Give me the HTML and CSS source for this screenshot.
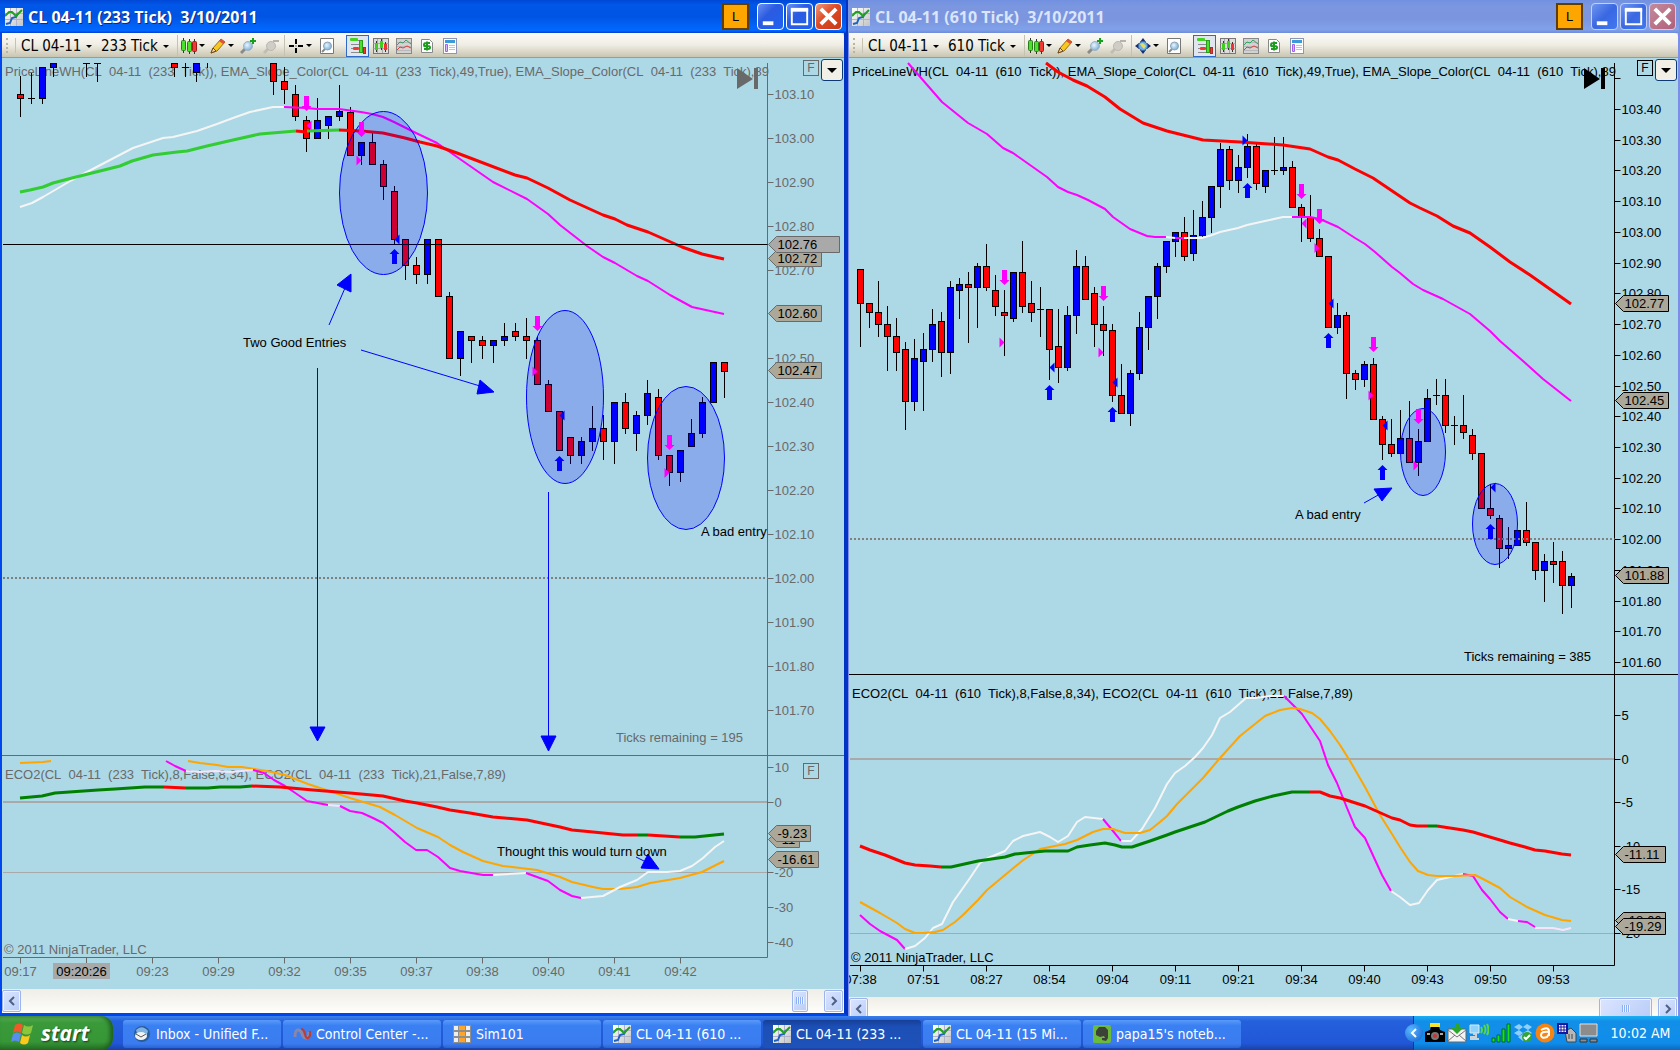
FILE: index.html
```
<!DOCTYPE html>
<html lang="en">

<head>
    <meta charset="UTF-8">
    <meta name="viewport" content="width=device-width, initial-scale=1.0">
    <title>CL 04-11 Charts</title>
    <link rel="stylesheet" href="styles.css">
</head>

<body>
    <!-- Shared icons -->
    <svg class="defs" width="0" height="0" aria-hidden="true">
        <linearGradient id="gloss" x1="0" y1="0" x2="1" y2="1">
            <stop offset="0" stop-color="#fff" />
            <stop offset="1" stop-color="#c4c4c4" />
        </linearGradient>
        <radialGradient id="lensFill" cx=".4" cy=".4" r=".7">
            <stop offset="0" stop-color="#e8f6ff" />
            <stop offset="1" stop-color="#6fa6cf" />
        </radialGradient>
        <symbol id="i-chart" viewBox="0 0 18 18">
            <rect width="18" height="18" fill="url(#gloss)" />
            <path d="M0 5.500h18M0 11.500h18M5.500 0v18M11.500 0v18" stroke="#b3b3c8" />
            <path d="M1 16l4-1 2-5 4-1 2-4" fill="none" stroke="#1c62c4" stroke-width="2" />
            <path d="M0 8l4-4 3 0 4 4 6-6" fill="none" stroke="#22a022" stroke-width="2" />
        </symbol>
        <symbol id="i-candles" viewBox="0 0 16 16">
            <path d="M2.500 0v15M8.500 1v15M13.500 1v15" stroke="#333" />
            <rect x=".5" y="2.500" width="4" height="10" rx="1" fill="#4be12b" stroke="#2a7d1b" />
            <rect x="6.500" y="3.500" width="4" height="10" rx="1" fill="#4be12b" stroke="#2a7d1b" />
            <rect x="11.500" y="3.500" width="4" height="10" rx="1" fill="#ef3a33" stroke="#a01a16" />
        </symbol>
        <symbol id="i-pencil" viewBox="0 0 16 16">
            <path d="M1 15l2-5 8-9 4 3-8 9z" fill="#f8c822" stroke="#9a6b12" />
            <path d="M11 1l4 3-2 2-4-3z" fill="#e0503c" />
            <path d="M1 15l2-5 3 3z" fill="#f1d9a8" stroke="#6a4a1a" />
        </symbol>
        <symbol id="i-zoomin" viewBox="0 0 16 16">
            <path d="M1 15l4-4" stroke="#8a8a8a" stroke-width="3" />
            <circle cx="8" cy="8" r="4.500" fill="url(#lensFill)" stroke="#9db4c6" />
            <path d="M13 0v6M10 3h6" stroke="#14a01a" stroke-width="2" />
        </symbol>
        <symbol id="i-zoomout" viewBox="0 0 16 16">
            <path d="M1 15l4-4" stroke="#c0bdb4" stroke-width="3" />
            <circle cx="8" cy="8" r="4.500" fill="#cfcdc6" stroke="#bab8b0" />
            <path d="M10 3h6" stroke="#b5b3ab" stroke-width="2" />
        </symbol>
        <symbol id="i-cross" viewBox="0 0 16 16">
            <path d="M8 1v5M8 10v5M1 8h5M10 8h5" stroke="#000" stroke-width="2" />
            <path d="M7.500 7.500h1v1h-1z" />
        </symbol>
        <symbol id="i-globe" viewBox="0 0 16 16">
            <path d="M8 0l3 4H5zM8 16l3-4H5zM0 8l4-3v6zM16 8l-4-3v6z" fill="#1a2c6c" />
            <circle cx="8" cy="8" r="4.500" fill="#6cb2ea" stroke="#3a6ca8" />
            <path d="M5 6l3-1 3 3-2 3-2-2z" fill="#e5dc63" />
        </symbol>
        <symbol id="i-page" viewBox="0 0 16 16">
            <path d="M1.500.5h13v15h-13z" fill="#fff" stroke="#777" />
            <path d="M3 14l3-3" stroke="#888" stroke-width="2" />
            <circle cx="8.500" cy="8" r="4" fill="url(#lensFill)" stroke="#8aa6ba" />
        </symbol>
        <symbol id="i-trader" viewBox="0 0 18 18">
            <path d="M2 7.500h9M2 11.500h9M2 15.500h9M8 3.500h4" stroke="#8c8c8c" />
            <rect x="1" y="1" width="8" height="3" rx="1" fill="#43d422" />
            <rect x="4" y="10" width="6" height="3" rx="1" fill="#ef3a33" />
            <rect x="10.500" y="3.500" width="3" height="12" fill="#4be12b" stroke="#2a9d1b" />
            <rect x="14.500" y="10.500" width="2" height="6" fill="#ef3a33" stroke="#b02a26" />
        </symbol>
        <symbol id="i-bars" viewBox="0 0 16 16">
            <rect x=".5" y=".5" width="15" height="15" fill="#ddd" stroke="#777" />
            <path d="M.5 5.500h15M.5 10.500h15M4.500 1v14M9.500 1v14" stroke="#aaa" />
            <path d="M3.500 3v11M8.500 1v11M12.500 4v10" stroke="#333" />
            <path d="M2 5h3v7H2zM7 3h3v7H7z" fill="#3fce20" />
            <path d="M11 6h3v6h-3z" fill="#e33" />
        </symbol>
        <symbol id="i-lines" viewBox="0 0 16 16">
            <rect x=".5" y=".5" width="15" height="15" fill="#d2d2d2" stroke="#888" />
            <path d="M1 4.500h14M1 8.500h14M1 12.500h14" stroke="#b8b8b8" />
            <path d="M1 7l3-3 3 1 3-3 5 4" fill="none" stroke="#2fa060" />
            <path d="M1 12l3-3 3 1 4-2 4 2" fill="none" stroke="#e03a3a" />
        </symbol>
        <symbol id="i-dollar" viewBox="0 0 14 16">
            <path d="M1.500 1.500h8l3 3v10h-11z" fill="#fff" stroke="#888" />
            <path d="M10 5H6Q4 5 4 7T6 8H8Q10 8 10 9.500T8 11H4M7 3.500v9" fill="none" stroke="#1f9a22" stroke-width="2" />
        </symbol>
        <symbol id="i-props" viewBox="0 0 14 16">
            <rect x=".5" y=".5" width="13" height="15" fill="#fff" stroke="#8d97b5" />
            <path d="M2 2h10v3H2z" fill="#3d9ad8" />
            <path d="M2.500 6.500h2v7h-2z" fill="#d8b8ff" stroke="#a060ee" />
            <path d="M6 7.500h6M6 9.500h6M6 11.500h6" stroke="#b9c4e4" />
        </symbol>
    </svg>

    <main class="desktop">
        <!-- 233 tick chart -->
        <section class="window active">
            <header class="titlebar">
                <svg class="app-icon"><use href="#i-chart" /></svg>
                <h2>CL 04-11 (233 Tick)&nbsp; 3/10/2011</h2>
                <button class="link-btn">L</button>
                <button class="win-btn" aria-label="Minimize"><svg viewBox="0 0 26 26"><path d="M5 18h11v4H5z" fill="#fff" /></svg></button>
                <button class="win-btn" aria-label="Maximize"><svg viewBox="0 0 26 26"><path d="M5 6h16v15H5z" fill="none" stroke="#fff" stroke-width="2" /><path d="M4 4h18v4H4z" fill="#fff" /></svg></button>
                <button class="win-btn close" aria-label="Close"><svg viewBox="0 0 26 26"><path d="M5 5l16 16M21 5L5 21" stroke="#fff" stroke-width="4" /></svg></button>
            </header>
            <nav class="toolbar">
                <span class="grip"></span>
                <label class="pick instrument"><select aria-label="Instrument"><option>CL 04-11</option></select></label>
                <label class="pick period"><select aria-label="Period"><option>233 Tick</option></select></label>
                <button class="tool menu sep" aria-label="Chart style"><svg><use href="#i-candles" /></svg></button>
                <button class="tool menu" aria-label="Draw"><svg><use href="#i-pencil" /></svg></button>
                <button class="tool" aria-label="Zoom in"><svg><use href="#i-zoomin" /></svg></button>
                <button class="tool" aria-label="Zoom out"><svg><use href="#i-zoomout" /></svg></button>
                <button class="tool menu sep" aria-label="Cursor"><svg><use href="#i-cross" /></svg></button>
                <button class="tool" aria-label="Data box"><svg><use href="#i-page" /></svg></button>
                <button class="tool on" aria-label="Chart trader"><svg><use href="#i-trader" /></svg></button>
                <button class="tool" aria-label="Data series"><svg><use href="#i-bars" /></svg></button>
                <button class="tool" aria-label="Indicators"><svg><use href="#i-lines" /></svg></button>
                <button class="tool" aria-label="Strategies"><svg><use href="#i-dollar" /></svg></button>
                <button class="tool" aria-label="Properties"><svg><use href="#i-props" /></svg></button>
            </nav>
            <div class="chart">
                <svg class="plot dim" id="chart233" viewBox="2 58 842 931">
                    <text x="5" y="76">PriceLineWH(CL&nbsp; 04-11&nbsp; (233&nbsp; Tick)), EMA_Slope_Color(CL&nbsp; 04-11&nbsp; (233&nbsp; Tick),49,True), EMA_Slope_Color(CL&nbsp; 04-11&nbsp; (233&nbsp; Tick),89</text>
                    <text x="5" y="779">ECO2(CL&nbsp; 04-11&nbsp; (233&nbsp; Tick),8,False,8,34), ECO2(CL&nbsp; 04-11&nbsp; (233&nbsp; Tick),21,False,7,89)</text>
                    <text x="616" y="742">Ticks remaining = 195</text>
                    <text x="4" y="954">© 2011 NinjaTrader, LLC</text>
                    <g class="data"></g>
                    <g class="zone">
                        <ellipse cx="383.5" cy="193" rx="44" ry="81.5" />
                        <ellipse cx="565" cy="397" rx="38.5" ry="86.5" />
                        <ellipse cx="686" cy="458" rx="38.5" ry="71.5" />
                    </g>
                    <g class="marks"></g>
                    <g class="pointer">
                        <path d="M329 325L345 288M361 350L480 386M317.500 368V728M548.500 492V738M636 857L650 864" />
                        <path d="M351 274L337 285L351 292ZM494 392L480 380L477 394ZM310 727H325L317.500 741ZM541 736H556L548.500 751ZM648 854L641 868L659 869Z" />
                    </g>
                    <g class="note">
                        <text x="243" y="347">Two Good Entries</text>
                        <text x="701" y="536">A bad entry</text>
                        <text x="497" y="856">Thought this would turn down</text>
                    </g>
                    <path d="M737 68L753 79L737 89ZM754 68H758V89H754Z" fill="#696969" />
                </svg>
                <div class="corner">
                    <button class="flag">F</button>
                    <button class="drop" aria-label="Chart menu"></button>
                </div>
                <button class="flag lower">F</button>
            </div>
            <div class="scroll">
                <button aria-label="Scroll left"><svg viewBox="0 0 10 10"><path d="M7 1L3 5l4 4" /></svg></button>
                <span class="thumb"></span>
                <button aria-label="Scroll right"><svg viewBox="0 0 10 10"><path d="M3 1l4 4-4 4" /></svg></button>
            </div>
        </section>

        <!-- 610 tick chart -->
        <section class="window">
            <header class="titlebar">
                <svg class="app-icon"><use href="#i-chart" /></svg>
                <h2>CL 04-11 (610 Tick)&nbsp; 3/10/2011</h2>
                <button class="link-btn">L</button>
                <button class="win-btn" aria-label="Minimize"><svg viewBox="0 0 26 26"><path d="M5 18h11v4H5z" fill="#fff" /></svg></button>
                <button class="win-btn" aria-label="Maximize"><svg viewBox="0 0 26 26"><path d="M5 6h16v15H5z" fill="none" stroke="#fff" stroke-width="2" /><path d="M4 4h18v4H4z" fill="#fff" /></svg></button>
                <button class="win-btn close" aria-label="Close"><svg viewBox="0 0 26 26"><path d="M5 5l16 16M21 5L5 21" stroke="#fff" stroke-width="4" /></svg></button>
            </header>
            <nav class="toolbar">
                <span class="grip"></span>
                <label class="pick instrument"><select aria-label="Instrument"><option>CL 04-11</option></select></label>
                <label class="pick period"><select aria-label="Period"><option>610 Tick</option></select></label>
                <button class="tool menu sep" aria-label="Chart style"><svg><use href="#i-candles" /></svg></button>
                <button class="tool menu" aria-label="Draw"><svg><use href="#i-pencil" /></svg></button>
                <button class="tool" aria-label="Zoom in"><svg><use href="#i-zoomin" /></svg></button>
                <button class="tool" aria-label="Zoom out"><svg><use href="#i-zoomout" /></svg></button>
                <button class="tool menu sep" aria-label="Cursor"><svg><use href="#i-globe" /></svg></button>
                <button class="tool" aria-label="Data box"><svg><use href="#i-page" /></svg></button>
                <button class="tool on" aria-label="Chart trader"><svg><use href="#i-trader" /></svg></button>
                <button class="tool" aria-label="Data series"><svg><use href="#i-bars" /></svg></button>
                <button class="tool" aria-label="Indicators"><svg><use href="#i-lines" /></svg></button>
                <button class="tool" aria-label="Strategies"><svg><use href="#i-dollar" /></svg></button>
                <button class="tool" aria-label="Properties"><svg><use href="#i-props" /></svg></button>
            </nav>
            <div class="chart">
                <svg class="plot" id="chart610" viewBox="849 58 829 939">
                    <text x="852" y="76">PriceLineWH(CL&nbsp; 04-11&nbsp; (610&nbsp; Tick)), EMA_Slope_Color(CL&nbsp; 04-11&nbsp; (610&nbsp; Tick),49,True), EMA_Slope_Color(CL&nbsp; 04-11&nbsp; (610&nbsp; Tick),89</text>
                    <text x="852" y="698">ECO2(CL&nbsp; 04-11&nbsp; (610&nbsp; Tick),8,False,8,34), ECO2(CL&nbsp; 04-11&nbsp; (610&nbsp; Tick),21,False,7,89)</text>
                    <text x="1464" y="661">Ticks remaining = 385</text>
                    <text x="851" y="962">© 2011 NinjaTrader, LLC</text>
                    <g class="data"></g>
                    <g class="zone">
                        <ellipse cx="1423" cy="452" rx="22.5" ry="43.5" />
                        <ellipse cx="1495" cy="524" rx="22.5" ry="40.5" />
                    </g>
                    <g class="marks"></g>
                    <g class="pointer">
                        <path d="M1364 503L1380 494" />
                        <path d="M1392 488L1374 489L1382 501Z" />
                    </g>
                    <g class="note">
                        <text x="1295" y="519">A bad entry</text>
                    </g>
                    <path d="M1584 68L1600 79L1584 89ZM1601 68H1605V89H1601Z" />
                </svg>
                <div class="corner">
                    <button class="flag">F</button>
                    <button class="drop" aria-label="Chart menu"></button>
                </div>
            </div>
            <div class="scroll">
                <button aria-label="Scroll left"><svg viewBox="0 0 10 10"><path d="M7 1L3 5l4 4" /></svg></button>
                <span class="thumb wide"></span>
                <button aria-label="Scroll right"><svg viewBox="0 0 10 10"><path d="M3 1l4 4-4 4" /></svg></button>
            </div>
        </section>
    </main>

    <!-- Taskbar -->
    <footer class="taskbar">
        <button class="start">
            <svg viewBox="0 0 24 24">
                <path d="M4 4q4-3 8 0l-2 8q-4-3-8 0z" fill="#f05a28" />
                <path d="M13 4q4 3 9 0l-2 8q-4 3-9 0z" fill="#8cc63c" />
                <path d="M2 13q4-3 8 0l-2 8q-4-3-8 0z" fill="#5a8df0" />
                <path d="M11 14q4 3 8 0l-2 8q-4 3-8 0z" fill="#fcc81c" />
            </svg>
            start
        </button>
        <div class="tasks">
            <button class="task">
                <svg viewBox="0 0 18 18"><circle cx="9" cy="9" r="8" fill="#2a5d9c" /><path d="M3 5q6-6 12 1l-2 6H5z" fill="#7db4e4" /><ellipse cx="8" cy="11" rx="6" ry="4" fill="#f2f2f2" /><path d="M3 9l5 3 5-3" fill="none" stroke="#555" /></svg>
                Inbox - Unified F...
            </button>
            <button class="task">
                <svg viewBox="0 0 18 18"><path d="M2 12Q2 5 5 5T9 9T13 13T16 7" fill="none" stroke="#8a86a8" stroke-width="3" /><path d="M8 4q3 0 4 5t3 4q3-2 2-7" fill="none" stroke="#c03a30" stroke-width="2" /></svg>
                Control Center -...
            </button>
            <button class="task">
                <svg viewBox="0 0 18 18"><path d="M0 0h18v18H0z" fill="#8e8e8e" /><path d="M1 1h4v4H1zM1 7h4v4H1zM1 13h4v4H1zM13 1h4v4h-4zM13 7h4v4h-4zM13 13h4v4h-4z" fill="#eee" /><path d="M6 1h6v4H6zM6 7h6v4H6zM6 13h6v4H6z" fill="#ffa426" /></svg>
                Sim101
            </button>
            <button class="task"><svg><use href="#i-chart" /></svg>CL 04-11 (610 ...</button>
            <button class="task current"><svg><use href="#i-chart" /></svg>CL 04-11 (233 ...</button>
            <button class="task"><svg><use href="#i-chart" /></svg>CL 04-11 (15 Mi...</button>
            <button class="task">
                <svg viewBox="0 0 18 18"><rect width="18" height="18" rx="2" fill="#6cba3c" /><path d="M3 6l3-4 6 0 3 3 0 8-2 3-4-1 0-2 3 0-1-2-4 1-4-2z" fill="#3c4238" /></svg>
                papa15's noteb...
            </button>
        </div>
        <div class="tray">
            <button class="chevron" aria-label="Show hidden icons"><svg viewBox="0 0 18 18"><path d="M11 5L7 9l4 4" fill="none" stroke="#fff" stroke-width="2" /></svg></button>
            <svg viewBox="0 0 20 20"><path d="M5 0h10v4H5z" fill="#f4e22c" /><path d="M0 9l5-2 1-3h8l1 3 5 2v10H0z" /><circle cx="10" cy="13" r="4" fill="#777" /><circle cx="10" cy="13" r="2" fill="#c33" /><path d="M2 11h3M15 11h3" stroke="#aaa" stroke-width="2" /></svg>
            <svg viewBox="0 0 20 20"><path d="M1 6h18v13H1z" fill="#f3f3f3" stroke="#666" /><path d="M1 18l7-6M19 18l-7-6M1 7l9 7 9-7" fill="none" stroke="#777" /><path d="M8 0h4v5h4l-6 6-6-6h4z" fill="#2ba52b" /></svg>
            <svg viewBox="0 0 20 20"><path d="M1 2h9v8H1z" fill="#8fd2fa" stroke="#d8ecf8" /><path d="M4 11h3v3H2v2h8" fill="none" stroke="#c8d4dc" stroke-width="2" /><path d="M12 4q2 3 0 6M15 2q3 5 0 9M18 1q3 6 0 11" fill="none" stroke="#5ad83c" stroke-width="2" /></svg>
            <svg viewBox="0 0 20 20"><path d="M1 15h3v4H1zM6 12h3v7H6zM11 6h3v13h-3zM16 1h3v18h-3z" fill="#14e414" stroke="#063" /></svg>
            <svg viewBox="0 0 20 20"><path d="M1 4l5-3 4 3-4 3zM10 4l4-3 5 3-4 3zM1 10l5-3 4 3-4 3zM10 10l5-3 4 3-4 3zM5 14l5-3 4 3-4 4z" fill="#8fd0fb" /><circle cx="14" cy="14" r="5" fill="#35a335" /><path d="M11 14l2 2 4-4" fill="none" stroke="#fff" stroke-width="2" /></svg>
            <svg viewBox="0 0 20 20"><circle cx="10" cy="10" r="9.500" fill="#f58412" /><path d="M6 7q7-4 8 1v5M14 9q-8-1-8 3t6 2l2-3" fill="none" stroke="#fff" stroke-width="2" /></svg>
            <svg viewBox="0 0 20 20"><path d="M8 8l6-3 5 5v9h-9z" fill="#b8b8b8" stroke="#444" /><path d="M12 11v5M15 11v5" stroke="#444" /><path d="M1 1h9v9H1z" fill="#fff" stroke="#16169c" stroke-width="2" /><path d="M2 4h7M2 7h7M4 2v7M7 2v7" stroke="#16169c" /></svg>
            <svg viewBox="0 0 20 20"><path d="M1 1h17v12H1z" fill="#8c8c8c" stroke="#e0e0e0" /><path d="M1 16h7v3H1zM11 16h7v3h-7z" fill="#8c8c8c" stroke="#333" /></svg>
            <time>10:02 AM</time>
        </div>
    </footer>

    <script src="charts.js"></script>
</body>

</html>
```
FILE: styles.css
```
/* General Styles */
* {
    box-sizing: border-box;
}

body {
    margin: 0;
    height: 100vh;
    display: flex;
    flex-direction: column;
    overflow: hidden;
    background-color: #add8e6;
    font-family: "DejaVu Sans Condensed", "Noto Sans", sans-serif;
    font-size: 14px;
}

button,
select {
    font: inherit;
    color: inherit;
    border: none;
    background: none;
    margin: 0;
    padding: 0;
}

button svg {
    display: block;
}

.defs {
    position: absolute;
}

.desktop {
    flex: 1;
    min-height: 0;
    display: grid;
    grid-template-columns: 848fr 832fr;
}

/* Windows */
.window {
    display: flex;
    flex-direction: column;
    min-width: 0;
    min-height: 0;
    border: solid #7b8fe8;
    border-width: 0 2px 0 1px;
}

.window.active {
    border-color: #0046ee;
    border-width: 0 4px 3px 2px;
    border-right-color: #0233c4;
}

.titlebar {
    display: flex;
    align-items: center;
    flex: none;
    height: 33px;
    margin: 0 -1px;
    padding: 0 3px 0 4px;
    background: linear-gradient(#7191e0, #7c97e0 20%, #7b96df 60%, #80a2ea 90%, #6f8bd8);
    color: #dbe5fb;
}

.active .titlebar {
    margin: 0 -2px;
    padding: 0 4px 0 5px;
    background: linear-gradient(#0047d6, #0057e8 15%, #0054e3 50%, #0066fb 85%, #0068ff 93%, #003dd0);
    color: #fff;
    text-shadow: 1px 1px #0a2a86;
}

.app-icon {
    width: 18px;
    height: 18px;
    margin-right: 5px;
}

.titlebar h2 {
    flex: 1;
    margin: 0;
    font: bold 16px "Open Sans", sans-serif;
    white-space: nowrap;
}

.link-btn {
    width: 27px;
    height: 27px;
    margin-right: 8px;
    background-color: #ffa500;
    border: 2px solid #5f3e00;
    color: #000;
    text-shadow: none;
    font: 13px "Liberation Sans", sans-serif;
}

.win-btn {
    width: 27px;
    height: 27px;
    margin-right: 2px;
    border: 1px solid #c0d0f8;
    border-radius: 4px;
    background: linear-gradient(135deg, #6f96f0, #3a67e2 50%, #3f78f0);
}

.active .win-btn {
    border-color: #fff;
    background: linear-gradient(135deg, #6c92f4, #2b5be0 40%, #1f63f0);
}

.win-btn.close {
    margin-right: 0;
    background: linear-gradient(135deg, #c48a9c, #b0607a);
}

.active .win-btn.close {
    background: linear-gradient(135deg, #f09878, #dd4a26 45%, #c83a14);
}

/* Toolbar */
.toolbar {
    display: flex;
    align-items: center;
    flex: none;
    height: 25px;
    padding: 1px 0 0 4px;
    background: linear-gradient(#fcfbf8, #efede3 50%, #c9c5b2);
    border-bottom: 1px solid #a89c74;
    border-radius: 0 4px 0 0;
}

.grip {
    width: 10px;
    height: 15px;
    border-left: 2px dotted #b8b4a2;
    border-right: 1px solid #c5c2b2;
}

.pick {
    position: relative;
    height: 22px;
}

.pick select {
    appearance: none;
    width: 100%;
    height: 22px;
    font-size: 15px;
}

.instrument {
    width: 80px;
    margin-left: 5px;
}

.period {
    width: 74px;
}

.pick::after,
.menu::after {
    content: "";
    border: 3px solid transparent;
    border-top-color: #000;
    border-bottom: none;
}

.pick::after {
    position: absolute;
    right: 9px;
    top: 10px;
}

.period.pick::after {
    right: 6px;
}

.tool {
    display: flex;
    align-items: center;
    justify-content: center;
    gap: 2px;
    width: 23px;
    height: 22px;
}

.tool svg {
    width: 16px;
    height: 16px;
}

.tool.menu {
    width: 28px;
}

.tool.sep {
    width: 31px;
    margin-left: 2px;
    border-left: 1px solid #c5c2b2;
}

.tool.on {
    margin-left: 8px;
    border: 1px solid #316ac5;
    background-color: #dfe6f0;
}

.tool.on svg {
    width: 18px;
    height: 18px;
}

/* Charts */
.chart {
    position: relative;
    flex: 1;
    min-height: 0;
    background-color: #add8e6;
}

.plot {
    display: block;
    width: 100%;
    height: 100%;
    font: 13px "Liberation Sans", Arial, sans-serif;
    --ink: #000;
}

.plot.dim {
    --ink: #696969;
}

.plot text {
    fill: var(--ink);
}

.plot .note text,
.plot .tag text,
.plot .cursor text {
    fill: #000;
}

.axis {
    fill: none;
    stroke: var(--ink);
}

.level {
    stroke: #a9a9a9;
}

.dotted {
    stroke: #808080;
    stroke-width: 2;
    stroke-dasharray: 2 2;
}

.price {
    stroke: #000;
}

.tag path {
    fill: #aca899;
    stroke: var(--ink);
}

.tag.cross path {
    fill: #a9a9a9;
}

.cursor rect {
    fill: #a9a9a9;
}

.bar {
    stroke: #000;
}

.curve {
    fill: none;
    stroke-linejoin: round;
}

.zone ellipse {
    fill: rgba(0, 0, 255, 0.2);
    stroke: #0000ff;
}

.pointer path {
    fill: #0000ff;
    stroke: #0000ff;
}

.corner {
    position: absolute;
    top: 1px;
    right: 1px;
    display: flex;
    gap: 2px;
}

.flag {
    width: 16px;
    height: 16px;
    margin-top: 1px;
    border: 1px solid #000;
    color: #000;
    font: 12px "Liberation Sans", sans-serif;
}

.active .flag {
    border-color: #696969;
    color: #696969;
}

.flag.lower {
    position: absolute;
    right: 25px;
    bottom: 210px;
}

.drop {
    width: 22px;
    height: 22px;
    border: 1px solid #0a3a78;
    border-radius: 3px;
    background-color: #f2f0e6;
}

.drop::after {
    content: "";
    display: block;
    width: 0;
    margin: 0 auto;
    border: 5px solid transparent;
    border-top-color: #000;
    border-bottom: none;
}

/* Scrollbars */
.scroll {
    display: flex;
    flex: none;
    height: 19px;
    padding: 1px 1px 0 0;
    overflow: hidden;
    background: linear-gradient(#efede6, #fefefb);
}

.active .scroll {
    height: 24px;
}

.scroll button,
.thumb {
    flex: none;
    width: 19px;
    height: 22px;
    border: 1px solid #9db4ec;
    border-radius: 2px;
    background: linear-gradient(135deg, #dbe5ff, #b8ccf8);
    box-shadow: inset 0 0 0 1px #eef3ff;
}

.scroll button svg {
    width: 10px;
    height: 10px;
    margin: 0 auto;
    fill: none;
    stroke: #4d6185;
    stroke-width: 2;
}

.thumb {
    width: 16px;
    margin-left: auto;
    margin-right: 16px;
    padding: 6px 3px;
}

.thumb::after {
    content: "";
    display: block;
    width: 8px;
    height: 7px;
    margin: 0 auto;
    background: repeating-linear-gradient(90deg, #8cb0f8 0 1px, #eef4ff 1px 2px);
}

.thumb.wide {
    width: 53px;
    margin-right: 6px;
}

/* Taskbar */
.taskbar {
    display: flex;
    flex: none;
    height: 34px;
    background: linear-gradient(#3a80ea, #2460dc 15%, #2157d8 80%, #1941a5);
    color: #fff;
}

.start {
    display: flex;
    align-items: center;
    gap: 6px;
    width: 113px;
    padding-left: 11px;
    border-radius: 0 12px 12px 0;
    background: linear-gradient(#5bad59, #3a9a3a 20%, #379737 75%, #256f25);
    box-shadow: inset -3px 0 4px #1e5f1e;
    font: italic bold 21px "Open Sans", sans-serif;
    text-shadow: 1px 1px 2px #143c14;
}

.start svg {
    width: 24px;
    height: 24px;
}

.tasks {
    display: flex;
    flex: 1;
    gap: 2px;
    padding: 4px 0 2px 10px;
    min-width: 0;
}

.task {
    display: flex;
    align-items: center;
    gap: 5px;
    flex: 0 1 158px;
    min-width: 0;
    padding-left: 10px;
    overflow: hidden;
    white-space: nowrap;
    border-radius: 3px;
    background: linear-gradient(#5a9af8, #3a80f3 20%, #3a7cf0 85%, #2a62d0);
}

.task.current {
    background: linear-gradient(#173f96, #1c50b8 25%, #1e52b7);
}

.task svg {
    flex: none;
    width: 18px;
    height: 18px;
}

.tray {
    display: flex;
    align-items: center;
    gap: 2px;
    width: 267px;
    background: linear-gradient(#1cb0f4, #1290e8 15%, #0f8cea 80%, #0d68be);
    border-left: 1px solid #0a3a9c;
}

.tray > svg {
    flex: none;
    width: 20px;
    height: 20px;
}

.chevron {
    flex: none;
    width: 18px;
    height: 18px;
    margin-left: -9px;
    border-radius: 9px;
    background: radial-gradient(circle at 6px 6px, #5ab8ff, #0f5fd0);
}

.tray time {
    margin: 0 auto;
    white-space: nowrap;
}
```
FILE: charts.js
```
// bar rows: index high top bottom low colour (r = down, b = up, d = doji)
const chart233 = {
    el: 'chart233', x0: 20.5, step: 11, left: 3, right: 767.5, edge: 844,
    bottom: 957.5, split: 755.5,
    bars: `0 76 94 99 117 r|1 73 98 98 104 d|2 67 67 99 104 b|3 63 63 68 77 b|6 63 63 63 77 d|7 63 63 63 82 d
14 63 63 68 77 r|15 63 67 67 77 d|16 63 63 73 82 b|17 63 63 63 68 w|23 63 63 82 95 r|24 67 81 90 104 r|25 85 94 117 121 r
26 116 120 139 152 r|27 98 120 139 139 b|28 116 116 126 139 b|29 85 111 117 121 b|30 107 112 156 156 r|31 142 142 156 165 b
32 133 142 165 165 r|33 160 164 187 200 r|34 186 191 240 244 r|35 239 239 266 280 r|36 257 265 275 284 r|37 239 239 275 284 b
38 239 239 297 297 r|39 292 296 359 359 r|40 331 331 359 376 b|41 336 336 341 363 r|42 336 340 346 359 r|43 340 340 346 363 b
44 323 336 341 346 b|45 323 331 337 341 r|46 318 336 341 359 r|47 336 340 385 385 r|48 380 384 412 412 r|49 411 411 451 451 r
50 437 437 456 464 r|51 437 441 456 464 b|52 406 428 442 451 b|53 415 428 442 460 r|54 402 402 442 464 b|55 393 402 429 434 r
56 411 415 434 451 b|57 380 393 416 425 b|58 389 397 456 460 r|59 455 455 473 486 r|60 450 450 473 482 b|61 419 433 447 447 b
62 397 402 434 438 b|63 362 362 403 403 b|64 362 362 372 398 r`,
    levels: [[802, 2], [872.5, 1]],
    dotted: 578,
    price: 244.5,
    yLabels: [['103.10', 94.5], ['103.00', 138.5], ['102.90', 182.5], ['102.80', 226.5], ['102.70', 270.5], ['102.50', 358.5],
        ['102.40', 402.5], ['102.30', 446.5], ['102.20', 490.5], ['102.10', 534.5], ['102.00', 578.5], ['101.90', 622.5],
        ['101.80', 666.5], ['101.70', 710.5], ['10', 767.5], ['0', 802.5], ['-20', 872.5], ['-30', 907.5], ['-40', 942.5]],
    tags: [['102.72', 258.5, 54], ['102.76', 244.5, 72, 'cross'], ['102.60', 313.5, 54], ['102.47', 370.5, 54],
        ['-11', 839.5, 32], ['-9.23', 833.5, 43], ['-16.61', 859.5, 51]],
    xLabels: ['09:17', '', '09:23', '09:29', '09:32', '09:35', '09:37', '09:38', '09:40', '09:41', '09:42'],
    xStep: 66,
    cursor: ['09:20:26', 81.5],
    curves: [
        ['#f5f5f5', 2, '20,207 32,203 43,197 72,180 87,172 133,148 163,138 173,137 197,131 217,124 233,118 250,112 273,107 284,107'],
        ['#ff00ff', 2, '284,107 306,108 317,109 339,109 361,112 372,114 383,117 394,122 416,133 437,143 457,157 493,182 527,199 548,214 560,225 587,246 603,257 615,263 637,276 648,281 670,295 692,307 724,314'],
        ['#32cd32', 3, '20,192 30,190 43,187 53,183 72,178 120,166 132,161 153,155 177,152 187,151 207,146 233,140 260,134 296,131'],
        ['#ff0000', 3, '296,131 307,132'],
        ['#32cd32', 3, '307,131 339,130'],
        ['#ff0000', 3, '339,130 361,131 383,133 405,138 420,142 437,146 457,153 515,175 527,178 548,188 570,200 603,215 615,219 627,225 648,232 682,247 702,254 715,257 724,259'],
        ['#ffa500', 2, '20,763 43,762 51,761'],
        ['#ffa500', 2, '188,761 200,763 217,765 228,767 242,767 267,771 285,775 308,784 350,798 380,807 395,815 417,828 438,837 450,845 463,852 483,861 503,866 537,870 560,877 572,882 593,887 603,889 620,889 637,887 650,883 680,878 702,872 724,861'],
        ['#ff00ff', 2, '166,761 175,766 186,771'],
        ['#f7e4f9', 2, '186,771 200,772 215,771 230,772 253,770'],
        ['#ff00ff', 2, '253,770 264,773 274,780 285,786 307,801 328,805'],
        ['#f7e4f9', 2, '328,805 340,806'],
        ['#ff00ff', 2, '340,806 350,811 362,813 373,818 383,823 395,833 405,842 416,850 427,850 438,857 450,868 460,871 483,875 493,875'],
        ['#f5f5f5', 2, '493,875 526,873'],
        ['#ff00ff', 2, '526,873 537,877 548,881 560,890 572,896 581,898'],
        ['#f5f5f5', 2, '581,898 603,896 620,887 637,880 648,872 667,872 680,871 692,866 703,858 715,847 724,841'],
        ['#008000', 3, '20,798 42,796 55,793 98,790 115,789 130,788 145,787 164,787'],
        ['#ff0000', 3, '164,787 186,788'],
        ['#008000', 3, '186,788 208,788 220,787 240,787 252,786'],
        ['#ff0000', 3, '252,786 280,787 313,790 350,793 383,796 405,801 417,803 437,807 450,810 470,813 493,817 527,820 560,827 572,830 593,832 623,835 637,835'],
        ['#008000', 3, '637,835 648,835'],
        ['#ff0000', 3, '648,835 680,837'],
        ['#008000', 3, '680,837 695,837 724,834']
    ],
    downs: [[306.5, 96], [361.5, 122], [537.5, 316], [669.5, 435]],
    ups: [[394.5, 249], [559.5, 456]],
    arrows: [['m', -1, 306.5, 125.5], ['m', 1, 361.5, 160.5], ['m', 1, 537.5, 371.5], ['m', 1, 669.5, 473], ['b', -1, 394.5, 239.5], ['b', -1, 559.5, 415.5]]
};

const chart610 = {
    el: 'chart610', x0: 860.5, step: 9, left: 850, right: 1614.5, edge: 1678,
    bottom: 965.5, split: 674.5,
    bars: `0 269 269 304 347 r|1 303 303 313 328 r|2 281 312 325 337 r|3 306 324 337 371 r|4 318 336 353 371 r|5 342 349 402 430 r
6 339 358 402 411 b|7 333 349 362 411 b|8 309 324 350 362 b|9 312 321 353 377 r|10 281 287 353 374 b|11 278 284 291 319 b
12 272 284 288 343 r|13 263 266 288 328 b|14 244 266 288 291 r|15 275 290 307 316 r|16 290 312 316 356 r|17 272 272 319 322 b
18 241 272 307 313 r|19 281 303 313 322 r|20 287 309 309 337 d|21 309 309 350 380 r|22 309 346 368 383 r|23 306 315 368 371 b
24 250 266 316 334 b|25 256 266 300 300 r|26 287 293 325 347 r|27 306 324 331 356 r|28 324 330 396 402 r|29 364 395 414 414 r
30 370 373 414 426 b|31 312 327 374 380 b|32 296 296 328 350 b|33 263 266 297 319 b|34 241 241 267 273 b|35 232 232 242 257 b
36 217 232 257 261 r|37 210 235 254 261 b|38 201 217 236 238 b|39 186 186 218 233 b|40 143 149 187 208 b|41 146 149 181 190 r
42 155 167 181 193 b|43 134 146 168 178 b|44 142 146 184 190 r|45 170 170 187 193 b|46 137 170 170 175 d|47 137 167 171 175 b
48 161 167 208 208 r|49 204 207 218 242 r|50 195 217 239 242 r|51 229 238 257 257 r|52 256 256 328 328 r|53 303 315 328 334 b
54 312 315 374 399 r|55 370 373 380 390 r|56 361 364 380 387 b|57 358 364 420 420 r|58 416 419 445 460 r|59 419 444 454 457 r
60 410 438 454 454 b|61 401 438 463 463 r|62 429 441 463 476 b|63 389 398 442 442 b|64 379 395 395 405 d|65 379 395 426 433 r
66 416 425 425 445 d|67 395 425 433 439 r|68 429 435 454 460 r|69 453 453 509 509 r|70 484 508 516 519 r|71 515 518 549 568 r
72 527 545 549 559 b|73 530 530 546 546 b|74 502 530 543 546 r|75 542 542 571 580 r|76 554 561 571 602 b|77 542 561 565 583 r
78 551 561 586 614 r|79 573 576 586 608 b`,
    levels: [[759, 2], [933.5, 1]],
    dotted: 539,
    yLabels: [['', 78.5], ['103.40', 109.5], ['103.30', 140.5], ['103.20', 170.5], ['103.10', 201.5], ['103.00', 232.5], ['102.90', 263.5],
        ['102.80', 293.5], ['102.70', 324.5], ['102.60', 355.5], ['102.50', 386.5], ['102.40', 416.5], ['102.30', 447.5],
        ['102.20', 478.5], ['102.10', 508.5], ['102.00', 539.5], ['101.90', 570.5], ['101.80', 601.5], ['101.70', 631.5],
        ['101.60', 662.5], ['5', 715.5], ['0', 759.5], ['-5', 802.5], ['-10', 846.5], ['-15', 889.5], ['-20', 933.5]],
    tags: [['102.77', 303.5, 54], ['102.45', 400.5, 54], ['101.88', 575.5, 54], ['-11.11', 854.5, 51], ['-18.66', 920.5, 51], ['-19.29', 926.5, 51]],
    xLabels: ['07:38', '07:51', '08:27', '08:54', '09:04', '09:11', '09:21', '09:34', '09:40', '09:43', '09:50', '09:53'],
    xStep: 63,
    curves: [
        ['#ff00ff', 2, '908,63 942,102 968,123 987,134 1003,148 1013,153 1047,177 1058,187 1068,192 1077,195 1088,200 1105,209 1113,217 1130,229 1147,236 1155,237 1166,237'],
        ['#f5f5f5', 2, '1166,237 1175,238'],
        ['#ff00ff', 2, '1175,238 1184,238'],
        ['#f5f5f5', 2, '1184,238 1202,238 1212,235 1220,232 1238,228 1247,225 1265,221 1283,217 1292,217'],
        ['#ff00ff', 2, '1292,217 1310,217 1320,219 1338,227 1355,238 1365,244 1375,252 1392,267 1400,273 1413,284 1423,290 1443,299 1470,314 1490,331 1500,341 1523,361 1543,379 1571,401'],
        ['#ff0000', 3, '1046,63 1058,72 1073,80 1087,86 1105,97 1120,109 1143,123 1167,131 1203,140 1240,142 1283,145 1310,149 1328,157 1338,160 1355,169 1373,178 1410,203 1420,208 1437,216 1453,226 1470,233 1490,247 1510,262 1530,275 1571,304'],
        ['#ff00ff', 2, '860,915 870,924 880,931 897,940 905,949'],
        ['#f5f5f5', 2, '905,949 915,946 925,938 933,928 942,924 953,902 963,888 970,878 980,863 988,858 1005,851 1013,841 1023,836 1040,832 1050,837 1058,842 1068,836 1077,822 1085,817 1103,819'],
        ['#ff00ff', 2, '1103,819 1113,831 1121,841'],
        ['#f5f5f5', 2, '1121,841 1131,841 1142,829 1155,808 1167,784 1175,773 1185,766 1195,757 1203,748 1212,735 1220,718 1230,712 1238,705 1246,698 1255,698 1270,696 1284,696'],
        ['#ff00ff', 2, '1284,696 1302,714 1312,729 1320,741 1328,765 1337,783 1347,808 1355,827 1365,838 1382,875 1391,891'],
        ['#f5f5f5', 2, '1391,891 1400,897 1410,905 1419,903 1428,890 1437,880 1450,877 1463,874'],
        ['#ff00ff', 2, '1463,874 1473,876 1482,890 1490,899 1500,912 1508,919'],
        ['#f5f5f5', 2, '1508,919 1518,921'],
        ['#ff00ff', 2, '1518,921 1527,922 1535,927'],
        ['#f7e4f9', 2, '1535,928 1553,928 1563,930 1571,928'],
        ['#ffa500', 2, '860,902 880,913 897,923 905,929 915,933 923,933 935,932 943,930 955,922 963,915 978,900 987,890 1005,875 1022,861 1040,849 1055,846 1065,844 1077,840 1093,832 1103,829 1113,829 1125,833 1140,833 1150,830 1160,822 1167,816 1177,804 1203,778 1220,758 1240,736 1255,724 1265,716 1280,710 1292,708 1300,709 1312,713 1320,719 1330,731 1340,745 1350,761 1365,787 1380,815 1392,834 1400,847 1410,862 1418,871 1428,875 1437,876 1455,876 1475,875 1483,879 1500,888 1510,897 1527,907 1545,915 1562,920 1571,921'],
        ['#ff0000', 3, '860,846 870,850 885,855 895,859 905,863 915,865 930,866 941,867'],
        ['#008000', 3, '941,867 951,867 978,861 1005,857 1015,854 1025,853 1045,851 1068,851 1077,847 1090,845 1105,843 1115,845 1122,847 1132,847 1150,841 1167,835 1175,832 1205,822 1228,811 1238,807 1255,801 1273,796 1292,792 1310,792'],
        ['#ff0000', 3, '1310,792 1320,792 1330,796 1340,798 1365,806 1392,818 1400,820 1410,825 1417,826 1427,826'],
        ['#008000', 3, '1427,826 1437,826'],
        ['#ff0000', 3, '1437,826 1463,830 1473,832 1483,835 1500,840 1510,843 1525,847 1535,850 1545,851 1562,854 1571,855']
    ],
    downs: [[1004.5, 270], [1103.5, 286], [1301.5, 184], [1319.5, 209], [1373.5, 337], [1418.5, 409]],
    ups: [[1247.5, 183], [1049.5, 385], [1112.5, 407], [1328.5, 333], [1382.5, 465], [1490.5, 524]],
    arrows: [['m', 1, 1004.5, 342.5], ['m', 1, 1103.5, 352.5], ['m', 1, 1319.5, 248], ['m', 1, 1373.5, 395.5], ['m', 1, 1418.5, 465.5],
        ['m', -1, 1301.5, 223.5], ['b', -1, 1049.5, 367.5], ['b', -1, 1112.5, 382.5], ['b', -1, 1328.5, 303.5],
        ['b', -1, 1382.5, 425.5], ['b', -1, 1490.5, 487.5], ['b', 1, 1247.5, 140.5]]
};

function drawBars(c) {
    return c.bars.split(/[|\n]/).map(row => {
        const [i, high, top, bottom, low, kind] = row.trim().split(' ');
        const x = c.x0 + i * c.step;
        let out = `<path class="bar" d="M${x} ${high}V${low}"/>`;
        if (kind === 'd') {
            out += `<path class="bar" d="M${x - 3.5} ${+top + 0.5}h7"/>`;
        } else if (kind !== 'w') {
            const fill = kind === 'r' ? '#ff0000' : '#0000ff';
            out += `<rect class="bar" x="${x - 3}" y="${+top + 0.5}" width="6" height="${bottom - top - 1}" fill="${fill}"/>`;
        }
        return out;
    }).join('');
}

function drawAxes(c) {
    let out = c.levels.map(([y, w]) => `<path class="level" stroke-width="${w}" d="M${c.left} ${y}H${c.right}"/>`).join('');
    out += `<path class="axis" d="M${c.right} 63V${c.bottom}H${c.left}M${c.left - 1} ${c.split}H${c.edge}"/>`;
    c.yLabels.forEach(([label, y]) => {
        out += `<path class="axis" d="M${c.right} ${y}h6"/><text x="${c.right + 7}" y="${y + 4.5}">${label}</text>`;
    });
    c.xLabels.forEach((label, i) => {
        const x = c.x0 + i * c.xStep;
        out += `<path class="axis" d="M${x} ${c.bottom}v6"/><text x="${x}" y="${c.bottom + 18.5}" text-anchor="middle">${label}</text>`;
    });
    if (c.cursor) {
        const [label, x] = c.cursor;
        out += `<g class="cursor"><rect x="${x - 28.5}" y="963" width="57" height="16"/><text x="${x}" y="976" text-anchor="middle">${label}</text></g>`;
    }
    return out;
}

function drawTags(c) {
    return c.tags.map(([label, y, width, type = '']) => {
        const x = c.right + 1;
        return `<g class="tag ${type}"><path d="M${x} ${y}l8 -8H${x + width - 1}v16H${x + 8}z"/><text x="${x + 9}" y="${y + 4.5}">${label}</text></g>`;
    }).join('');
}

function drawMarks(c) {
    let out = '';
    c.downs.forEach(([x, y]) => {
        out += `<path fill="#ff00ff" d="M${x - 2.5} ${y}h5v10h2.500l-5 5l-5 -5h2.500z"/>`;
    });
    c.ups.forEach(([x, y]) => {
        out += `<path fill="#0000ff" d="M${x} ${y}l5 5h-2.500v10h-5v-10h-2.500z"/>`;
    });
    c.arrows.forEach(([color, dir, x, y]) => {
        out += `<path fill="${color === 'm' ? '#ff00ff' : '#0000ff'}" d="M${x} ${y}l${-5 * dir} -5v10z"/>`;
    });
    return out;
}

[chart233, chart610].forEach(c => {
    const svg = document.getElementById(c.el);
    const curves = c.curves.map(([color, w, pts]) => `<polyline class="curve" stroke="${color}" stroke-width="${w}" points="${pts}"/>`).join('');
    let html = drawAxes(c) + drawBars(c) + curves;
    html += `<path class="dotted" d="M${c.left} ${c.dotted}H${c.right}"/>`;
    if (c.price) {
        html += `<path class="price" d="M${c.left} ${c.price}H${c.right}"/>`;
    }
    svg.querySelector('.data').innerHTML = html + drawTags(c);
    svg.querySelector('.marks').innerHTML = drawMarks(c);
});
```
